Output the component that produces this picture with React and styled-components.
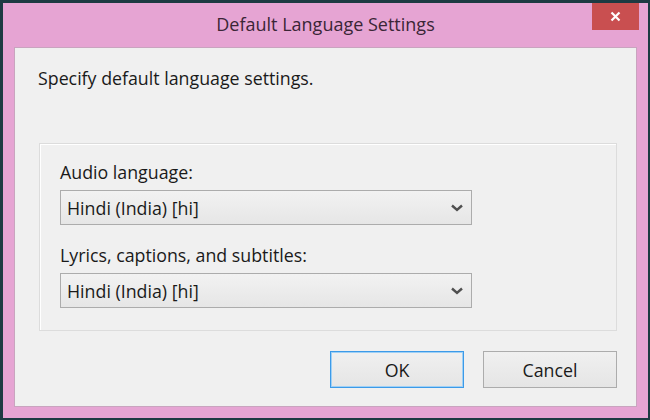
import styled, { createGlobalStyle } from 'styled-components';

const GlobalStyle = createGlobalStyle`
  html, body {
    margin: 0;
    padding: 0;
    background: #1d3a42;
    width: 650px;
    height: 420px;
    overflow: hidden;
  }
  body {
    font-family: "Open Sans", "Noto Sans", sans-serif;
  }
`;

const Window = styled.div`
  box-sizing: border-box;
  width: 645px;
  height: 415px;
  margin: 3px 0 0 3px;
  background: #e6a4d3;
  padding: 0 11px 11px 11px;
  display: flex;
  flex-direction: column;
`;

const TitleBar = styled.div`
  position: relative;
  height: 44px;
  display: flex;
  align-items: center;
  justify-content: center;
`;

const Title = styled.div`
  font-size: 18px;
  color: #3a2636;
  margin-top: -2px;
`;

const CloseButton = styled.div`
  position: absolute;
  top: 0;
  right: -2px;
  width: 47px;
  height: 27px;
  background: #c94f50;
  display: flex;
  align-items: center;
  justify-content: center;
`;

const Content = styled.div`
  flex: 1;
  background: #f0f0f0;
  border: 1px solid #c9a4bf;
  display: flex;
  flex-direction: column;
  padding: 0 19px 18px 23px;
`;

const Intro = styled.div`
  font-size: 17.8px;
  line-height: 22px;
  color: #1a1a1a;
  margin-top: 19px;
`;

const GroupBox = styled.div`
  margin: 54px 0 0 1px;
  border: 1px solid #dcdcdc;
  box-shadow: inset 1px 1px 0 #ffffff;
  padding: 17px 20px 22px 20px;
  display: flex;
  flex-direction: column;
`;

const Label = styled.div`
  font-size: 17.8px;
  color: #1a1a1a;
  line-height: 22px;
  margin: ${(p) => (p.$first ? '0' : '19px')} 0 7px 0;
`;

const Select = styled.div`
  box-sizing: border-box;
  width: 412px;
  height: 35px;
  border: 1px solid #acacac;
  background: linear-gradient(#f2f2f2, #e6e6e6);
  display: flex;
  align-items: center;
  justify-content: space-between;
  padding: 0 8px 0 6px;
  font-size: 17.8px;
  color: #1a1a1a;
`;

const ButtonRow = styled.div`
  margin-top: auto;
  display: flex;
  justify-content: flex-end;
  gap: 19px;
`;

const Button = styled.div`
  box-sizing: border-box;
  width: 134px;
  height: 37px;
  border: 1px solid ${(p) => (p.$default ? '#3c9ae8' : '#acacac')};
  box-shadow: ${(p) => (p.$default ? 'inset 0 0 0 1px #9fd0f5' : 'none')};
  background: linear-gradient(#f0f0f0, #e5e5e5);
  display: flex;
  align-items: center;
  justify-content: center;
  font-size: 17.8px;
  color: #1a1a1a;
`;

const Chevron = () => (
  <svg width="12" height="8" viewBox="0 0 12 8">
    <path d="M1 1.5 L6 6 L11 1.5" fill="none" stroke="#505050" strokeWidth="2.4" />
  </svg>
);

const CloseIcon = () => (
  <svg width="11" height="11" viewBox="0 0 11 11">
    <path d="M1.5 1.5 L9.5 9.5 M9.5 1.5 L1.5 9.5" stroke="#ffffff" strokeWidth="2.2" />
  </svg>
);

export default function App() {
  return (
    <>
      <GlobalStyle />
      <Window>
        <TitleBar>
          <Title>Default Language Settings</Title>
          <CloseButton>
            <CloseIcon />
          </CloseButton>
        </TitleBar>
        <Content>
          <Intro>Specify default language settings.</Intro>
          <GroupBox>
            <Label $first>Audio language:</Label>
            <Select>
              <span>Hindi (India) [hi]</span>
              <Chevron />
            </Select>
            <Label>Lyrics, captions, and subtitles:</Label>
            <Select>
              <span>Hindi (India) [hi]</span>
              <Chevron />
            </Select>
          </GroupBox>
          <ButtonRow>
            <Button $default>OK</Button>
            <Button>Cancel</Button>
          </ButtonRow>
        </Content>
      </Window>
    </>
  );
}
